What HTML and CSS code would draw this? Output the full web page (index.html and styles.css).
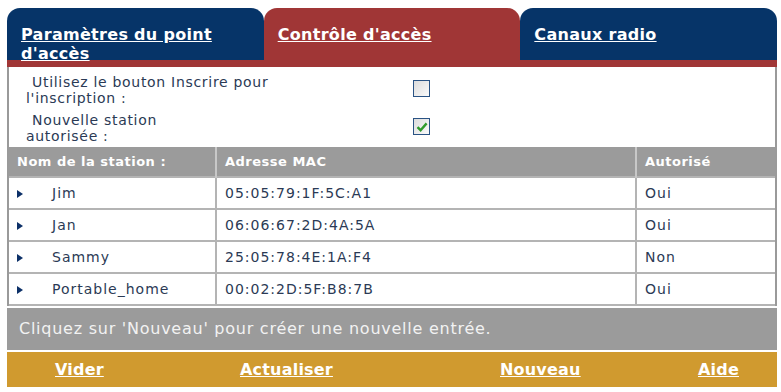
FILE: index.html
```html
<!DOCTYPE html>
<html lang="fr">
<head>
	<meta charset="UTF-8">
	<title>Contrôle d'accès</title>
	<link rel="stylesheet" href="styles.css">
</head>
<body>
	<div class="panel">
		<div class="tabs">
			<div class="tab"><a href="#">Paramètres du point<br>d'accès</a></div>
			<div class="tab active"><a href="#">Contrôle d'accès</a></div>
			<div class="tab"><a href="#">Canaux radio</a></div>
		</div>
		<div class="strip"></div>
		<div class="content">
			<div class="options">
				<div class="opt">
					<div class="label"><span class="first">Utilisez le bouton Inscrire pour</span><br>l'inscription :</div>
					<span class="box"></span>
				</div>
				<div class="opt">
					<div class="label"><span class="first">Nouvelle station</span><br>autorisée :</div>
					<span class="box">
						<svg width="14" height="14" viewBox="0 0 14 14"><path d="M2.5 7.2 L5.6 10.2 L11.6 3.4" fill="none" stroke="#2f9a2a" stroke-width="2.4"/></svg>
					</span>
				</div>
			</div>
			<table class="stations">
				<tr>
					<th class="c1">Nom de la station :</th>
					<th class="c2">Adresse MAC</th>
					<th class="c3">Autorisé</th>
				</tr>
				<tr>
					<td class="c1"><span class="arrow"></span>Jim</td>
					<td class="c2">05:05:79:1F:5C:A1</td>
					<td class="c3">Oui</td>
				</tr>
				<tr>
					<td class="c1"><span class="arrow"></span>Jan</td>
					<td class="c2">06:06:67:2D:4A:5A</td>
					<td class="c3">Oui</td>
				</tr>
				<tr>
					<td class="c1"><span class="arrow"></span>Sammy</td>
					<td class="c2">25:05:78:4E:1A:F4</td>
					<td class="c3">Non</td>
				</tr>
				<tr>
					<td class="c1"><span class="arrow"></span>Portable_home</td>
					<td class="c2">00:02:2D:5F:B8:7B</td>
					<td class="c3">Oui</td>
				</tr>
			</table>
		</div>
		<div class="note">Cliquez sur 'Nouveau' pour créer une nouvelle entrée.</div>
		<div class="actions">
			<a href="#">Vider</a>
			<a href="#">Actualiser</a>
			<a href="#">Nouveau</a>
			<a href="#">Aide</a>
		</div>
	</div>
</body>
</html>
```

FILE: styles.css
```css
*{
	padding: 0;
	margin: 0;
	box-sizing: border-box;
}
html,body{
	width: 100%;
	height: 100%;
	background-color: #fff;
}
body{
	font-family: "DejaVu Sans", Verdana, sans-serif;
}
.panel{
	width: 770px;
	margin: 8px 0 0 7px;
}
.tabs{
	display: flex;
	height: 52px;
}
.tab{
	flex: 1;
	background-color: #063468;
	border-radius: 13px 13px 0 0;
	padding: 17px 0 0 14px;
	line-height: 19px;
}
.tab.active{
	background-color: #a03636;
}
.tab a{
	color: #fff;
	font-size: 16px;
	font-weight: bold;
	letter-spacing: 0.3px;
	text-decoration: underline;
}
.strip{
	height: 7px;
	background-color: #a03636;
}
.content{
	border-left: 2px solid #9a9a9a;
	border-right: 2px solid #9a9a9a;
}
.options{
	height: 80px;
	padding-top: 7px;
}
.opt{
	display: flex;
	align-items: flex-start;
	height: 38px;
}
.label{
	width: 404px;
	padding-left: 17px;
	font-size: 14px;
	letter-spacing: 0.7px;
	line-height: 16px;
	color: #2b3a55;
}
.label .first{
	padding-left: 6px;
}
.box{
	width: 17px;
	height: 17px;
	border: 1px solid #2a5384;
	background: linear-gradient(135deg, #dcdcdc, #fafafa);
	display: flex;
	justify-content: center;
	align-items: center;
	margin-top: 6px;
}
.stations{
	width: 100%;
	border-collapse: collapse;
	font-size: 14px;
	letter-spacing: 1px;
	color: #2b3a55;
}
.stations th{
	background-color: #9b9b9b;
	color: #fff;
	text-align: left;
	height: 30px;
	font-size: 13px;
	letter-spacing: 0.5px;
	padding-left: 8px;
	border-right: 2px solid #c8c8c8;
}
.stations td{
	height: 32px;
	padding-left: 8px;
	border-top: 2px solid #b4b4b4;
	border-right: 2px solid #b4b4b4;
}
.stations tr:last-child td{
	border-bottom: 2px solid #b4b4b4;
}
.stations th.c3,
.stations td.c3{
	border-right: none;
}
.c1{
	width: 207px;
}
.c2{
	width: 420px;
}
.stations td.c1{
	padding-left: 8px;
}
.arrow{
	display: inline-block;
	width: 0;
	height: 0;
	border-top: 4px solid transparent;
	border-bottom: 4px solid transparent;
	border-left: 6px solid #0c3068;
	margin-right: 29px;
}
.note{
	margin-top: 2px;
	height: 42px;
	background-color: #9b9b9b;
	color: #f2f2f2;
	font-size: 16px;
	letter-spacing: 0.75px;
	line-height: 42px;
	padding-left: 12px;
}
.actions{
	margin-top: 2px;
	height: 35px;
	background-color: #d09a2f;
	display: grid;
	grid-template-columns: 185px 260px 198px auto;
	align-items: center;
	padding-left: 48px;
}
.actions a{
	color: #fff;
	font-size: 16px;
	font-weight: bold;
	letter-spacing: 0.2px;
	text-decoration: underline;
}
```
